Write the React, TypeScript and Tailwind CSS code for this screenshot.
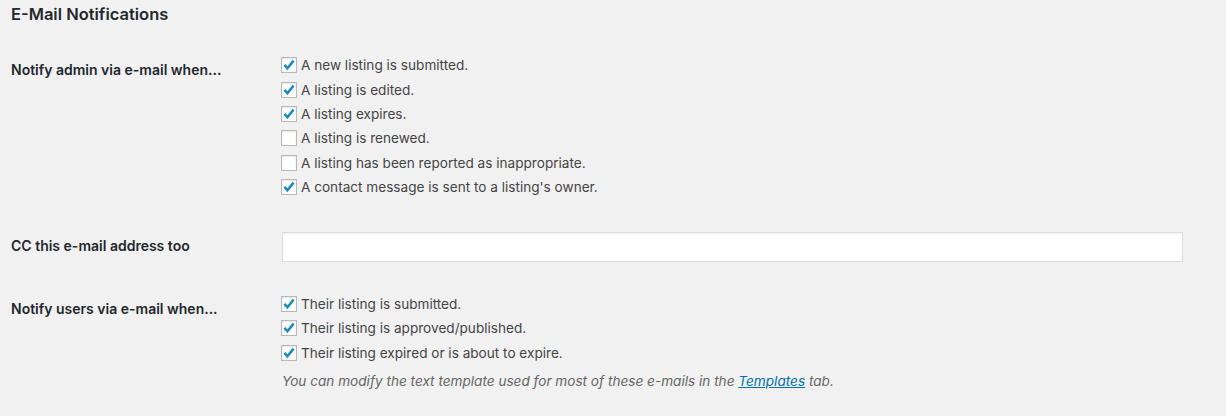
import React from "react";

const Check = ({ checked }: { checked: boolean }) => (
  <span className="relative inline-block w-4 h-4 shrink-0 bg-white border border-[#b4b9be] shadow-[inset_0_1px_2px_rgba(0,0,0,0.1)]">
    {checked && (
      <svg viewBox="0 0 16 16" className="absolute left-[-1px] top-[-1px] w-4 h-4">
        <path d="M3.4 7.9 L6.4 11.2 L12.6 3.6" fill="none" stroke="#1e8cbe" strokeWidth="2.6" strokeLinecap="butt" strokeLinejoin="miter" />
      </svg>
    )}
  </span>
);

const Row = ({ checked, text }: { checked: boolean; text: string }) => (
  <label className="flex items-center h-[24.4px] gap-[4px] -ml-px">
    <Check checked={checked} />
    <span className="text-[13.6px] text-[#444] leading-[20px]">{text}</span>
  </label>
);

export default function App() {
  return (
    <div className="min-h-[416px] bg-[#f1f1f1] pl-[11px] pr-[43px] font-['Inter',sans-serif]">
      <h2 className="h-[28px] leading-[28px] text-[16.5px] font-semibold text-[#23282d]">E-Mail Notifications</h2>

      <div className="flex mt-[25px]">
        <div className="w-[271px] shrink-0 pt-[7px] text-[14px] leading-[20px] font-semibold text-[#23282d]">Notify admin via e-mail when...</div>
        <div className="flex-1 flex flex-col">
          <Row checked text="A new listing is submitted." />
          <Row checked text="A listing is edited." />
          <Row checked text="A listing expires." />
          <Row checked={false} text="A listing is renewed." />
          <Row checked={false} text="A listing has been reported as inappropriate." />
          <Row checked text="A contact message is sent to a listing's owner." />
        </div>
      </div>

      <div className="flex mt-[32.6px]">
        <div className="w-[271px] shrink-0 pt-[4px] text-[14px] leading-[20px] font-semibold text-[#23282d]">CC this e-mail address too</div>
        <div className="flex-1">
          <input type="text" className="block w-full h-[30px] bg-white border border-[#ddd] shadow-[inset_0_1px_2px_rgba(0,0,0,0.07)] outline-none" />
        </div>
      </div>

      <div className="flex mt-[29.8px]">
        <div className="w-[271px] shrink-0 pt-[7.2px] text-[14px] leading-[20px] font-semibold text-[#23282d]">Notify users via e-mail when...</div>
        <div className="flex-1 flex flex-col">
          <Row checked text="Their listing is submitted." />
          <Row checked text="Their listing is approved/published." />
          <Row checked text="Their listing expired or is about to expire." />
          <p className="mt-[6px] text-[13.6px] leading-[20px] italic text-[#666]">
            You can modify the text template used for most of these e-mails in the{" "}
            <a href="#" className="text-[#0073aa] underline">Templates</a> tab.
          </p>
        </div>
      </div>
    </div>
  );
}
